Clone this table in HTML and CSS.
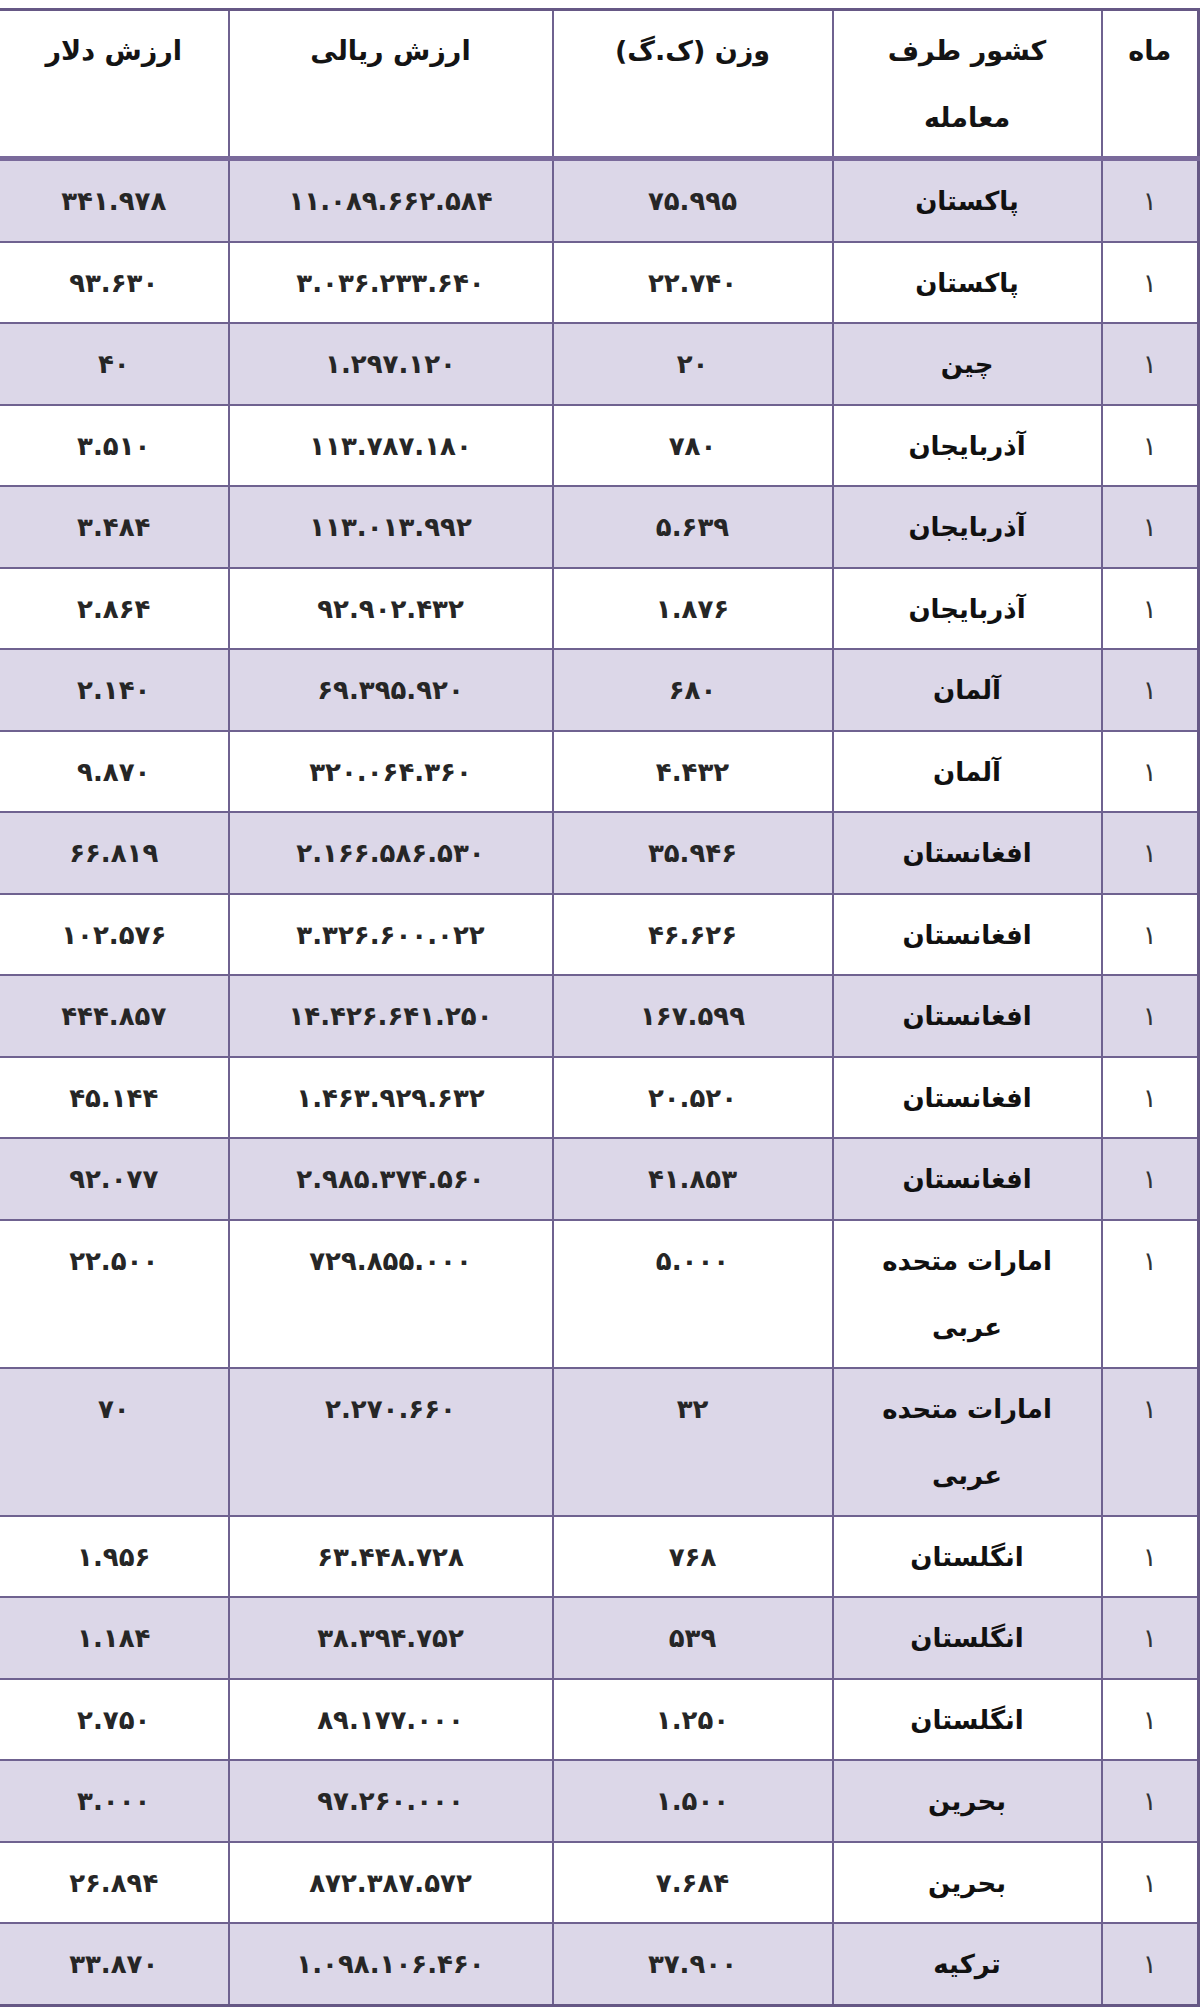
FILE: index.html
```html
<!DOCTYPE html>
<html lang="fa" dir="rtl">
<head>
<meta charset="utf-8">
<title>جدول صادرات</title>
<link rel="stylesheet" href="styles.css">
</head>
<body>
<table class="trade">
  <colgroup>
    <col class="c-month">
    <col class="c-country">
    <col class="c-weight">
    <col class="c-rial">
    <col class="c-dollar">
  </colgroup>
  <thead>
    <tr>
      <th>ماه</th>
      <th>کشور طرف<br>معامله</th>
      <th>وزن (ک.گ)</th>
      <th>ارزش ریالی</th>
      <th>ارزش دلار</th>
    </tr>
  </thead>
  <tbody>
    <tr class="alt"><td class="m">۱</td><td class="name">پاکستان</td><td>۷۵.۹۹۵</td><td>۱۱.۰۸۹.۶۶۲.۵۸۴</td><td>۳۴۱.۹۷۸</td></tr>
    <tr><td class="m">۱</td><td class="name">پاکستان</td><td>۲۲.۷۴۰</td><td>۳.۰۳۶.۲۳۳.۶۴۰</td><td>۹۳.۶۳۰</td></tr>
    <tr class="alt"><td class="m">۱</td><td class="name">چین</td><td>۲۰</td><td>۱.۲۹۷.۱۲۰</td><td>۴۰</td></tr>
    <tr><td class="m">۱</td><td class="name">آذربایجان</td><td>۷۸۰</td><td>۱۱۳.۷۸۷.۱۸۰</td><td>۳.۵۱۰</td></tr>
    <tr class="alt"><td class="m">۱</td><td class="name">آذربایجان</td><td>۵.۶۳۹</td><td>۱۱۳.۰۱۳.۹۹۲</td><td>۳.۴۸۴</td></tr>
    <tr><td class="m">۱</td><td class="name">آذربایجان</td><td>۱.۸۷۶</td><td>۹۲.۹۰۲.۴۳۲</td><td>۲.۸۶۴</td></tr>
    <tr class="alt"><td class="m">۱</td><td class="name">آلمان</td><td>۶۸۰</td><td>۶۹.۳۹۵.۹۲۰</td><td>۲.۱۴۰</td></tr>
    <tr><td class="m">۱</td><td class="name">آلمان</td><td>۴.۴۳۲</td><td>۳۲۰.۰۶۴.۳۶۰</td><td>۹.۸۷۰</td></tr>
    <tr class="alt"><td class="m">۱</td><td class="name">افغانستان</td><td>۳۵.۹۴۶</td><td>۲.۱۶۶.۵۸۶.۵۳۰</td><td>۶۶.۸۱۹</td></tr>
    <tr><td class="m">۱</td><td class="name">افغانستان</td><td>۴۶.۶۲۶</td><td>۳.۳۲۶.۶۰۰.۰۲۲</td><td>۱۰۲.۵۷۶</td></tr>
    <tr class="alt"><td class="m">۱</td><td class="name">افغانستان</td><td>۱۶۷.۵۹۹</td><td>۱۴.۴۲۶.۶۴۱.۲۵۰</td><td>۴۴۴.۸۵۷</td></tr>
    <tr><td class="m">۱</td><td class="name">افغانستان</td><td>۲۰.۵۲۰</td><td>۱.۴۶۳.۹۲۹.۶۳۲</td><td>۴۵.۱۴۴</td></tr>
    <tr class="alt"><td class="m">۱</td><td class="name">افغانستان</td><td>۴۱.۸۵۳</td><td>۲.۹۸۵.۳۷۴.۵۶۰</td><td>۹۲.۰۷۷</td></tr>
    <tr><td class="m">۱</td><td class="name">امارات متحده<br>عربی</td><td>۵.۰۰۰</td><td>۷۲۹.۸۵۵.۰۰۰</td><td>۲۲.۵۰۰</td></tr>
    <tr class="alt"><td class="m">۱</td><td class="name">امارات متحده<br>عربی</td><td>۳۲</td><td>۲.۲۷۰.۶۶۰</td><td>۷۰</td></tr>
    <tr><td class="m">۱</td><td class="name">انگلستان</td><td>۷۶۸</td><td>۶۳.۴۴۸.۷۲۸</td><td>۱.۹۵۶</td></tr>
    <tr class="alt"><td class="m">۱</td><td class="name">انگلستان</td><td>۵۳۹</td><td>۳۸.۳۹۴.۷۵۲</td><td>۱.۱۸۴</td></tr>
    <tr><td class="m">۱</td><td class="name">انگلستان</td><td>۱.۲۵۰</td><td>۸۹.۱۷۷.۰۰۰</td><td>۲.۷۵۰</td></tr>
    <tr class="alt"><td class="m">۱</td><td class="name">بحرین</td><td>۱.۵۰۰</td><td>۹۷.۲۶۰.۰۰۰</td><td>۳.۰۰۰</td></tr>
    <tr><td class="m">۱</td><td class="name">بحرین</td><td>۷.۶۸۴</td><td>۸۷۲.۳۸۷.۵۷۲</td><td>۲۶.۸۹۴</td></tr>
    <tr class="alt"><td class="m">۱</td><td class="name">ترکیه</td><td>۳۷.۹۰۰</td><td>۱.۰۹۸.۱۰۶.۴۶۰</td><td>۳۳.۸۷۰</td></tr>
  </tbody>
</table>
</body>
</html>
```
FILE: styles.css
```css
html, body {
  margin: 0;
  padding: 0;
  background: #ffffff;
}

body {
  padding-top: 8px;
  font-family: "DejaVu Sans", sans-serif;
  color: #1a1a1a;
}

.trade {
  width: 1200px;
  border-collapse: collapse;
  table-layout: fixed;
  border: 3px solid #665885;
}

.c-month { width: 97px; }
.c-country { width: 269px; }
.c-weight { width: 280px; }
.c-rial { width: 324px; }
.c-dollar { width: 230px; }

.trade th,
.trade td {
  border: 2px solid #6f6290;
  text-align: center;
  vertical-align: top;
  font-size: 26px;
  line-height: 66.5px;
  padding: 7px 6px 6px;
  font-weight: bold;
}

.trade th {
  background: #ffffff;
  font-size: 27px;
  color: #141414;
  padding-bottom: 5px;
}

.trade thead th {
  border-bottom: 5px solid #7a6a9b;
}

.trade td {
  color: #262626;
  letter-spacing: 2px;
}

.trade td.m {
  font-weight: normal;
  color: #333333;
}

.trade td.name {
  letter-spacing: 0;
  color: #111111;
}

.trade tr.alt td {
  background: #dcd7e8;
}
```
